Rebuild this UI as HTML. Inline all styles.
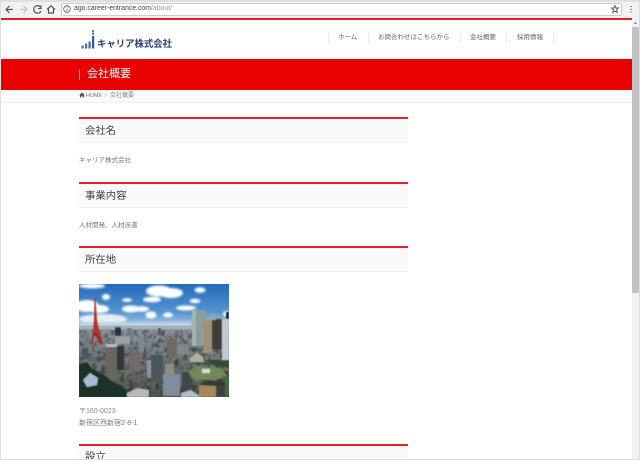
<!DOCTYPE html>
<html lang="ja"><head><meta charset="utf-8"><title>会社概要</title>
<style>
html,body{margin:0;padding:0;width:640px;height:460px;overflow:hidden;background:#fff}
body{position:relative;font-family:"Liberation Sans","Noto Sans CJK JP",sans-serif;color:#555}
.a{position:absolute;white-space:nowrap}
.t{filter:blur(.35px)}
.h{position:absolute;left:79px;width:329px;background:#f9f9f9;border-top:2px solid #e8202a;border-bottom:1px solid #f2f2f2;box-sizing:border-box;height:26px}
.h span{position:absolute;left:6px;top:4px;font-size:10.4px;line-height:17px;color:#444;white-space:nowrap}
.p{font-size:6.5px;line-height:10px;color:#777}
.n{font-size:6.5px;line-height:10px;color:#666;top:33px}
.s{position:absolute;top:33px;width:1px;height:10px;background:#eaeaea}
</style></head><body>
<!-- chrome -->
<div class="a" style="left:0;top:0;width:640px;height:18px;background:#f2f2f2;border-top:2px solid #dedede;box-sizing:border-box"></div>
<div class="a" style="left:61px;top:3px;width:559px;height:11px;background:#fff;border:1px solid #ccc;border-radius:2px"></div>
<svg class="a" style="left:0;top:0" width="640" height="19" viewBox="0 0 640 19" fill="none" stroke="#555" stroke-width="1.2">
<path d="M13 9.500H6M9.500 6L6 9.500L9.500 13"/>
<path d="M27 9.500H20M23.500 6L27 9.500L23.500 13" stroke="#c4c4c4"/>
<path d="M40.500 7A3.800 3.800 0 1 0 41 11M41 5.500V8.500H38"/>
<path d="M47 9.500L51 5.800L55 9.500M48.500 8.500V13H53.500V8.500"/>
<circle cx="67" cy="9" r="3.300" stroke-width=".8"/><path d="M67 8.500V11M67 6.800V7.600" stroke-width=".8"/>
<path d="M615 5.500L616 8H618.500L616.500 9.800L617.300 12.500L615 11L612.700 12.500L613.500 9.800L611.500 8H614Z" stroke-width=".9"/>
<path d="M631 6V7M631 8.800V9.800M631 11.600V12.600" stroke-width="1.300"/>
</svg>
<div class="a t" style="left:74px;top:3px;font-size:6.900px;line-height:12px;color:#444">ago.career-entrance.com<span style="color:#999">/about/</span></div>
<div class="a" style="left:1px;top:18px;width:631px;height:1.500px;background:#ee1c25"></div>

<!-- logo -->
<svg class="a" style="left:80px;top:28px" width="18" height="22" viewBox="0 0 18 22" fill="#3f6cb5">
<rect x="1.500" y="17.500" width="2.200" height="3"/><rect x="5" y="15.500" width="2.200" height="5"/><rect x="8.500" y="13.500" width="2.200" height="7"/>
<rect x="12" y="8" width="2.200" height="12.500" fill="#2e5aa0"/><rect x="12.300" y="2" width="1.500" height="2.500" fill="#2e5aa0"/><rect x="12.300" y="5" width="1.500" height="2" fill="#2e5aa0"/>
</svg>
<div class="a t" style="left:97px;top:37px;font-size:9.400px;line-height:14px;font-weight:700;color:#2b3f70">キャリア株式会社</div>

<!-- nav -->
<div class="s" style="left:328px"></div><div class="s" style="left:368px"></div><div class="s" style="left:460px"></div><div class="s" style="left:506px"></div><div class="s" style="left:553px"></div>
<div class="a t n" style="left:338px">ホーム</div>
<div class="a t n" style="left:378px">お問合わせはこちらから</div>
<div class="a t n" style="left:470px">会社概要</div>
<div class="a t n" style="left:517px">採用情報</div>

<!-- red band -->
<div class="a" style="left:1px;top:59px;width:631px;height:31px;background:#e90000"></div>
<div class="a" style="left:79px;top:69px;width:1px;height:11px;background:#f5a0a0"></div>
<div class="a t" style="left:87px;top:66px;font-size:11px;line-height:16px;color:#fff">会社概要</div>

<!-- breadcrumb -->
<div class="a" style="left:1px;top:90px;width:631px;height:12.500px;background:#fafafa;border-bottom:1px solid #eee;box-sizing:border-box"></div>
<svg class="a" style="left:79px;top:92px" width="6" height="6" viewBox="0 0 6 6" fill="#555"><path d="M3 .5L6 3.300H5V5.500H3.600V4H2.400V5.500H1V3.300H0Z"/></svg>
<div class="a t" style="left:86px;top:91px;font-size:5.300px;line-height:10px;color:#777">HOME</div>
<div class="a t" style="left:104px;top:91px;font-size:5.300px;line-height:10px;color:#aaa">&gt;</div>
<div class="a t" style="left:110px;top:91px;font-size:6px;line-height:10px;color:#888">会社概要</div>

<!-- sections -->
<div class="h" style="top:117px"><span class="t">会社名</span></div>
<div class="a t p" style="left:79px;top:156px">キャリア株式会社</div>
<div class="h" style="top:182px"><span class="t">事業内容</span></div>
<div class="a t p" style="left:79px;top:221px">人材開発、人材派遣</div>
<div class="h" style="top:246px"><span class="t">所在地</span></div>

<!-- photo -->
<svg class="a" style="left:79px;top:284px" width="150" height="113" viewBox="0 0 150 113">
<defs>
<linearGradient id="sky" x1="0" y1="0" x2="0" y2="1"><stop offset="0" stop-color="#2369b8"/><stop offset=".65" stop-color="#5596d2"/><stop offset="1" stop-color="#b8d0e2"/></linearGradient>
<linearGradient id="city" x1="0" y1="0" x2="0" y2="1"><stop offset="0" stop-color="#8d99a2"/><stop offset=".4" stop-color="#767d80"/><stop offset=".75" stop-color="#626862"/><stop offset="1" stop-color="#4c5450"/></linearGradient>
<filter id="b1" x="-30%" y="-30%" width="160%" height="160%"><feGaussianBlur stdDeviation="1.100"/></filter>
<filter id="b2"><feGaussianBlur stdDeviation=".5"/></filter>
<filter id="noise" x="0" y="0" width="100%" height="100%"><feTurbulence type="fractalNoise" baseFrequency=".22" numOctaves="2" seed="4"/><feColorMatrix values="0 0 0 0 0  0 0 0 0 0  0 0 0 0 0  2.400 0 0 0 -1.000"/><feGaussianBlur stdDeviation=".4"/></filter>
</defs>
<rect width="150" height="44" fill="url(#sky)"/>
<g fill="#fff" filter="url(#b1)">
<ellipse cx="13" cy="2" rx="13" ry="2.500"/>
<ellipse cx="80" cy="7" rx="13" ry="5.500"/><ellipse cx="92" cy="9" rx="12" ry="5"/><ellipse cx="73" cy="15.500" rx="9" ry="2.800"/>
<ellipse cx="27" cy="13" rx="4" ry="3"/><ellipse cx="48" cy="16" rx="5" ry="1.800"/>
<ellipse cx="121" cy="6" rx="5.500" ry="2.800"/><ellipse cx="116" cy="17" rx="5.500" ry="2.200"/>
<ellipse cx="8" cy="22" rx="12" ry="6"/><ellipse cx="20" cy="25" rx="10" ry="4"/>
<ellipse cx="52" cy="25" rx="9" ry="3.500"/><ellipse cx="63" cy="25" rx="7" ry="2.800"/>
<ellipse cx="107" cy="24" rx="10" ry="2.500"/>
<ellipse cx="72" cy="31" rx="5.500" ry="3.500"/><ellipse cx="89" cy="31" rx="5" ry="2.500"/>
<ellipse cx="148" cy="30" rx="4" ry="3"/>
<ellipse cx="24" cy="35" rx="24" ry="5" fill="#e6eef3"/>
<rect x="0" y="38" width="112" height="5" fill="#bcd2e2"/>
</g>
<rect y="42" width="150" height="71" fill="url(#city)"/>
<rect y="46" width="150" height="67" filter="url(#noise)" opacity=".55"/>
<g filter="url(#b2)">
<rect y="42" width="150" height="3" fill="#a7b3bc"/>
<!-- far skyline -->
<rect x="36" y="43" width="6" height="9" fill="#2c323c"/><rect x="48" y="44" width="5" height="14" fill="#6f7a82"/><rect x="60" y="50" width="5" height="18" fill="#7f888e"/><rect x="79" y="44" width="3" height="7" fill="#4f575e"/>
<rect x="20" y="50" width="6" height="14" fill="#78828a"/><rect x="5" y="48" width="5" height="16" fill="#707a83"/><rect x="36" y="52" width="15" height="8" fill="#98a1a6"/>
<rect x="3" y="64" width="6" height="11" fill="#4c555e"/>
<rect x="88" y="55" width="10" height="17" fill="#6d6a66"/>
<rect x="98" y="60" width="12" height="10" fill="#80868a"/>
<rect x="50" y="68" width="12" height="20" fill="#6f6a68"/>
<!-- towers -->
<rect x="113" y="26" width="14" height="36" fill="#8b9c99"/>
<rect x="113" y="26" width="4" height="36" fill="#a5b5b0"/>
<rect x="124" y="36" width="9" height="33" fill="#a08f78"/>
<rect x="133" y="35" width="10" height="30" fill="#3f3c3b"/>
<rect x="130" y="30" width="7" height="6" fill="#97a5b0"/>
<rect x="143" y="35" width="7" height="44" fill="#c2cacf"/>
<rect x="147" y="28" width="3" height="7" fill="#1e2630"/>
<!-- mid -->
<rect x="27" y="61" width="11" height="36" fill="#67665f"/><rect x="27" y="60" width="11" height="3" fill="#b7bcbc"/>
<rect x="38" y="62" width="7" height="24" fill="#33393c"/>
<rect x="71" y="71" width="13" height="26" fill="#4c555d"/><rect x="68" y="76" width="4" height="18" fill="#8b949b"/>
<rect x="86" y="80" width="9" height="14" fill="#8f8c82"/><rect x="96" y="85" width="8" height="17" fill="#5f6974"/>
<rect x="84" y="90" width="17" height="22" fill="#7f8e9c"/>
<rect x="103" y="88" width="8" height="22" fill="#3f464a"/>
<!-- park -->
<path d="M109 88L118 82L143 84L148 92L136 96L116 96Z" fill="#6f8a58"/>
<rect x="123" y="85" width="8" height="4" fill="#d8dcd8"/>
<path d="M111 74L118 69L124 73L125 78H111Z" fill="#aeb49c"/>
<path d="M126 76H150V84L134 81Z" fill="#324e30"/>
<path d="M144 92H150V112H146Z" fill="#3f7037"/>
<!-- brown building -->
<rect x="120" y="101" width="17" height="12" fill="#a6865a"/><path d="M120 101L128 96L146 98L146 103L136 102Z" fill="#37393a"/>
<rect x="137" y="102" width="9" height="10" fill="#3a423e"/>
<!-- left trees -->
<path d="M0 80L8 78L14 86L24 90L34 98L48 106V113H0Z" fill="#1f3226"/>
<path d="M4 96L11 89L19 94L18 101L8 103Z" fill="#a9bbd2"/>
<path d="M48 109L58 104L70 106V113H48Z" fill="#b9bab6"/>
<path d="M102 109L112 106L122 113H102Z" fill="#b4bdc7"/>
</g>
<!-- Tokyo Tower -->
<g filter="url(#b2)">
<path d="M15.500 14H16.500L18 36L20 46L24 60H20L17 50H15L13 60H12L14 46L15 36Z" fill="#b2352a"/>
<path d="M12 60L15 48H18L24 60H21L17 52L15 52L13.500 60Z" fill="#a32c24"/>
</g>
</svg>

<div class="a t p" style="left:79px;top:407px;color:#888;font-size:7px">〒160-0023</div>
<div class="a t p" style="left:79px;top:419px;font-size:7px">新宿区西新宿2-8-1</div>

<div class="h" style="top:444px;height:16px;border-bottom:0"><span class="t" style="top:3px">設立</span></div>

<!-- scrollbar -->
<div class="a" style="left:632px;top:19px;width:7px;height:440px;background:#f1f1f1"></div>
<div class="a" style="left:632px;top:27px;width:7px;height:266px;background:#c1c1c1"></div>
<svg class="a" style="left:632px;top:20px" width="7" height="6"><path d="M2 4L3.500 2L5 4Z" fill="#777"/></svg>
<div class="a" style="left:639px;top:0;width:1px;height:460px;background:#dedede"></div>
<div class="a" style="left:0;top:0;width:1px;height:460px;background:#dedede"></div>
<div class="a" style="left:0;top:459px;width:640px;height:1px;background:#dedede"></div>
</body></html>
